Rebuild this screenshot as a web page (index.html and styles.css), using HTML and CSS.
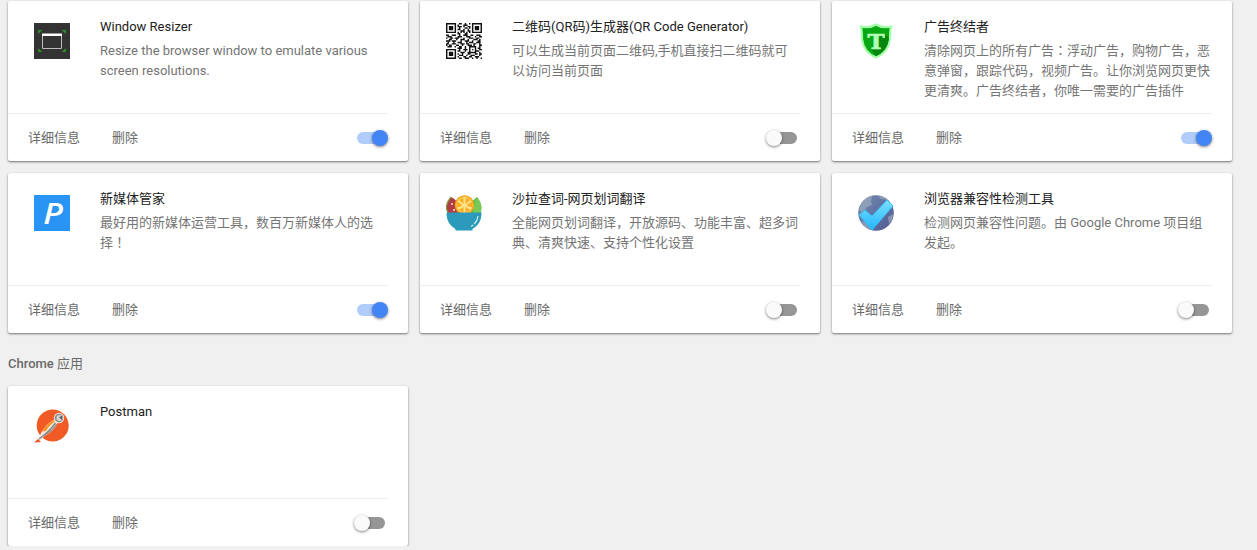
FILE: index.html
```html
<!DOCTYPE html>
<html lang="zh-CN">
<head>
<meta charset="utf-8">
<title>扩展程序</title>
<link rel="stylesheet" href="styles.css">
</head>
<body>
<main class="page">
  <section class="grid">
    <article class="card">
      <div class="info">
        <svg class="icon" viewBox="0 0 36 36"><rect width="36" height="36" fill="#333"/><path d="M4 7h4.500l-4.500 4zM32 7h-4.500l4.500 4zM4 29h4.500l-4.500-4zM32 29h-4.500l4.500-4z" fill="#2e8b2a"/><path d="M8.500 11v14.500h19V11" fill="none" stroke="#bbb"/><path d="M8 10.500h20v2.500H8z" fill="#fff"/></svg>
        <div class="copy"><h3 class="name">Window Resizer</h3><p class="desc">Resize the browser window to emulate various<br>screen resolutions.</p></div>
      </div>
      <div class="actions"><a class="link">详细信息</a><a class="link">删除</a><span class="toggle on"><i class="knob"></i></span></div>
    </article>
    <article class="card">
      <div class="info">
        <svg class="icon" viewBox="0 0 25 25"><g fill="none" stroke="#111"><path d="M.5.5h6v6h-6zM18.500.5h6v6h-6zM.5 18.500h6v6h-6z"/><path d="M9 .5h2m2 0h1m2 0h1M8 1.500h1m3 0h3M8 2.500h3m1 0h1m2 0h2M9 3.500h1m3 0h2m1 0h1M8 4.500h2m2 0h1m2 0h1M10 5.500h3m2 0h2M8 6.500h1m1 0h1m1 0h1m1 0h1m1 0h1M8 7.500h2m3 0h2M0 8.500h2m2 0h3m2 0h1m2 0h3m2 0h2m2 0h3M1 9.500h3m4 0h3m3 0h3m3 0h1m2 0h2M0 10.500h1m2 0h2m1 0h3m3 0h1m3 0h3m2 0h2M2 11.500h2m3 0h1m2 0h3m2 0h1m3 0h3m1 0h1M0 12.500h3m1 0h3m3 0h1m2 0h3m2 0h1m3 0h2M1 13.500h1m3 0h1m2 0h3m3 0h1m1 0h3m2 0h3M0 14.500h2m2 0h3m3 0h3m1 0h2m3 0h2m2 0h1M0 15.500h1m1 0h2m3 0h2m2 0h1m3 0h3m1 0h1m3 0h2M1 16.500h3m2 0h1m2 0h2m2 0h1m2 0h5m2 0h1M8 17.500h3m2 0h1m2 0h1m3 0h1m1 0h2M9 18.500h1m2 0h3m1 0h1m1 0h1m1 0h1m2 0h2M8 19.500h2m3 0h1m2 0h1m3 0h3M10 20.500h3m2 0h6m2 0h1M8 21.500h1m2 0h1m3 0h2m3 0h2m1 0h2M9 22.500h3m2 0h1m2 0h3m3 0h1M8 23.500h1m3 0h2m2 0h2m2 0h3M9 24.500h2m2 0h3m2 0h1m2 0h1m2 0h1"/></g><path d="M2 2h3v3H2zM20 2h3v3h-3zM2 20h3v3H2z" fill="#111"/></svg>
        <div class="copy"><h3 class="name">二维码(QR码)生成器(QR Code Generator)</h3><p class="desc">可以生成当前页面二维码,手机直接扫二维码就可<br>以访问当前页面</p></div>
      </div>
      <div class="actions"><a class="link">详细信息</a><a class="link">删除</a><span class="toggle"><i class="knob"></i></span></div>
    </article>
    <article class="card">
      <div class="info">
        <svg class="icon" viewBox="0 0 36 36"><path d="M18 1.500q6 4 15 2Q32 8 32 16c-1 9-6 15-14 18.500C10 31 5 25 4 16Q4 8 3 3.500q9 2 15-2z" fill="#09a812" stroke="#a2ffa8" stroke-width="2.200"/><path d="M27 11l4 4c-1 8-5 14-13 18l-5-7 7-1V15z" fill="#078610"/><text transform="translate(18 26) scale(1.15 1)" text-anchor="middle" class="shield-mark">T</text></svg>
        <div class="copy"><h3 class="name">广告终结者</h3><p class="desc">清除网页上的所有广告<span class="punct" lang="zh-TW">：</span>浮动广告，购物广告，恶<br>意弹窗，跟踪代码，视频广告。让你浏览网页更快<br>更清爽。广告终结者，你唯一需要的广告插件</p></div>
      </div>
      <div class="actions"><a class="link">详细信息</a><a class="link">删除</a><span class="toggle on"><i class="knob"></i></span></div>
    </article>
    <article class="card">
      <div class="info">
        <svg class="icon" viewBox="0 0 36 36"><rect width="36" height="36" fill="#2a94f4"/><text transform="translate(19 28.500) scale(1.15 1)" text-anchor="middle" class="p-mark">P</text></svg>
        <div class="copy"><h3 class="name">新媒体管家</h3><p class="desc">最好用的新媒体运营工具，数百万新媒体人的选<br>择<span class="punct" lang="zh-TW">！</span></p></div>
      </div>
      <div class="actions"><a class="link">详细信息</a><a class="link">删除</a><span class="toggle on"><i class="knob"></i></span></div>
    </article>
    <article class="card">
      <div class="info">
        <svg class="icon" viewBox="0 0 36 36"><path d="M5 2C0 8-1 13 2 18h15C15 11 11 5 5 2z" fill="#b13c43"/><path d="M5 2C0 8-1 13 2 18" fill="none" stroke="#7c9c48" stroke-width="1.200"/><path d="M31 2c-7 5-8 10-6 17h9c3-6 1-12-3-17z" fill="#5dbb46"/><path d="M31 2c-3 6-3 11-4 17h7c3-6 1-12-3-17z" fill="#79c957"/><g fill="#f7dfc8"><circle cx="6" cy="9" r="1"/><circle cx="11" cy="11" r="1"/><circle cx="8" cy="15" r="1.100"/><circle cx="14" cy="16" r="1"/></g><circle cx="18.500" cy="10" r="9.800" fill="#f5a81c"/><circle cx="18.500" cy="10" r="8" fill="#ffe38a"/><g fill="#f9ae25"><path d="M17.500 9L13 5q2-2 4.500-2zM19.500 9V3q3 0 5 2zM20.500 10.500l5-4q1.500 4 0 6zM16.500 10.500l-5-4q-1.500 4 0 6zM17.500 12v6l-5-3zM19.500 12v6l5-3z"/></g><path d="M.5 17.500h35c0 8-3 13-9 16.500v1.500h-17V34C3.500 30.500.5 25.500.5 17.500z" fill="#2b9abb"/><path d="M32 21c-.5 5-3 8-7 10.500" fill="none" stroke="#d8eddf" stroke-width="1.200" stroke-dasharray="9 1.500"/></svg>
        <div class="copy"><h3 class="name">沙拉查词-网页划词翻译</h3><p class="desc">全能网页划词翻译，开放源码、功能丰富、超多词<br>典、清爽快速、支持个性化设置</p></div>
      </div>
      <div class="actions"><a class="link">详细信息</a><a class="link">删除</a><span class="toggle"><i class="knob"></i></span></div>
    </article>
    <article class="card">
      <div class="info">
        <svg class="icon" viewBox="0 0 36 36"><defs><linearGradient id="globe" x2="1" y2="1"><stop stop-color="#7289b0"/><stop offset="1" stop-color="#515b91"/></linearGradient><linearGradient id="tick" x2="0" y2="1"><stop stop-color="#7be1ff"/><stop offset="1" stop-color="#22b5ff"/></linearGradient></defs><circle cx="18" cy="18" r="17.800" fill="url(#globe)"/><path d="M3 10Q6 3 14 1l-1 5 1 4-5 2-3 5-6-1zM20 1q7 0 10 4l-7-1zM3 26l7 2 4 7Q6 33 3 26zM30 22l5-3q0 6-4 10z" fill="#9fb0bd" opacity=".65"/><path d="M1 20l6-5 7 6L29 5l6 6-21 24z" fill="url(#tick)" stroke="#35bafa" stroke-width="1" stroke-linejoin="round"/></svg>
        <div class="copy"><h3 class="name">浏览器兼容性检测工具</h3><p class="desc">检测网页兼容性问题。由 Google Chrome 项目组<br>发起。</p></div>
      </div>
      <div class="actions"><a class="link">详细信息</a><a class="link">删除</a><span class="toggle"><i class="knob"></i></span></div>
    </article>
  </section>
  <h2 class="heading">Chrome <span class="heading-cjk">应用</span></h2>
  <section class="grid">
    <article class="card">
      <div class="info">
        <svg class="icon" viewBox="0 0 36 36"><circle cx="18.700" cy="17.500" r="16" fill="#f15a24"/><path d="M2 33l3-3.500L7.500 24Q14 14 21 11.500l2.500 3.500q-3 8-13 13l-4 4.500z" fill="#f6e9e0"/><circle cx="25" cy="10" r="5.200" fill="#f4e6df"/><circle cx="25" cy="10" r="4.300" fill="#8b8b8b"/><circle cx="25.500" cy="10" r="3" fill="#d5d5d5"/><path d="M25 9l3-1v4z" fill="#555"/><path d="M8 23.500q6-9 12-11l1 1q-6 4-9 9.500z" fill="#f8941d"/><path d="M5 31q9-6 16.500-16" stroke="#888" stroke-width="1.500" fill="none"/><path d="M10 27q9-4 12.500-11" stroke="#888" stroke-width="1.100" fill="none"/><path d="M0 34.500l4-3.500 3 3z" fill="#ee5528"/></svg>
        <div class="copy"><h3 class="name">Postman</h3></div>
      </div>
      <div class="actions"><a class="link">详细信息</a><a class="link">删除</a><span class="toggle"><i class="knob"></i></span></div>
    </article>
  </section>
</main>
</body>
</html>
```
FILE: styles.css
```css
* { box-sizing: border-box; }
body {
  margin: 0;
  background: #f0f0f0;
  color: #212121;
  font: 13px/20px Roboto, "Noto Sans CJK SC", sans-serif;
  overflow: hidden;
}
.page { padding: 1px 8px 0; }
.grid {
  display: grid;
  grid-template-columns: repeat(3, 400px);
  gap: 12px;
}
.card {
  display: flex;
  flex-direction: column;
  height: 160px;
  background: #fff;
  border-radius: 2px;
  box-shadow: 0 1px 2px rgba(0, 0, 0, .42), 0 1px 3px rgba(0, 0, 0, .15);
}
.info {
  display: flex;
  gap: 30px;
  height: 112px;
  padding: 16px 10px 0 26px;
}
.icon { width: 36px; height: 36px; margin-top: 6px; flex: none; overflow: visible; }
.copy { white-space: nowrap; }
.name { margin: 0 0 4px; font-size: 13px; font-weight: 400; line-height: 20px; }
.desc { margin: 0; color: #757575; }
.punct { font-family: "Noto Sans CJK TC", sans-serif; line-height: 1; }
.actions {
  display: flex;
  align-items: center;
  gap: 32px;
  width: 380px;
  height: 48px;
  padding: 0 3px 0 20px;
  border-top: 1px solid #eee;
  color: #6a6a6a;
}
.toggle {
  display: flex;
  align-items: center;
  width: 28px;
  height: 12px;
  margin: 0 0 0 auto;
  border-radius: 6px;
  background: #969696;
}
.knob {
  flex: none;
  width: 16px;
  height: 16px;
  margin-left: -3px;
  border-radius: 50%;
  background: #fafafa;
  box-shadow: 0 1px 3px rgba(0, 0, 0, .5);
}
.on { background: #b0ccfb; }
.on .knob { margin-left: 15px; background: #4285f4; }
.heading {
  margin: 21px 0 12px;
  color: #6a6a6a;
  font-size: 13px;
  font-weight: 500;
  line-height: 20px;
}
.heading-cjk { font-weight: 400; }
.shield-mark {
  fill: #b2ffb7;
  stroke: #b2ffb7;
  stroke-width: .6px;
  font: bold 20px "DejaVu Serif", serif;
}
.p-mark { fill: #fff; font: italic 600 29px "Open Sans", sans-serif; }
```
